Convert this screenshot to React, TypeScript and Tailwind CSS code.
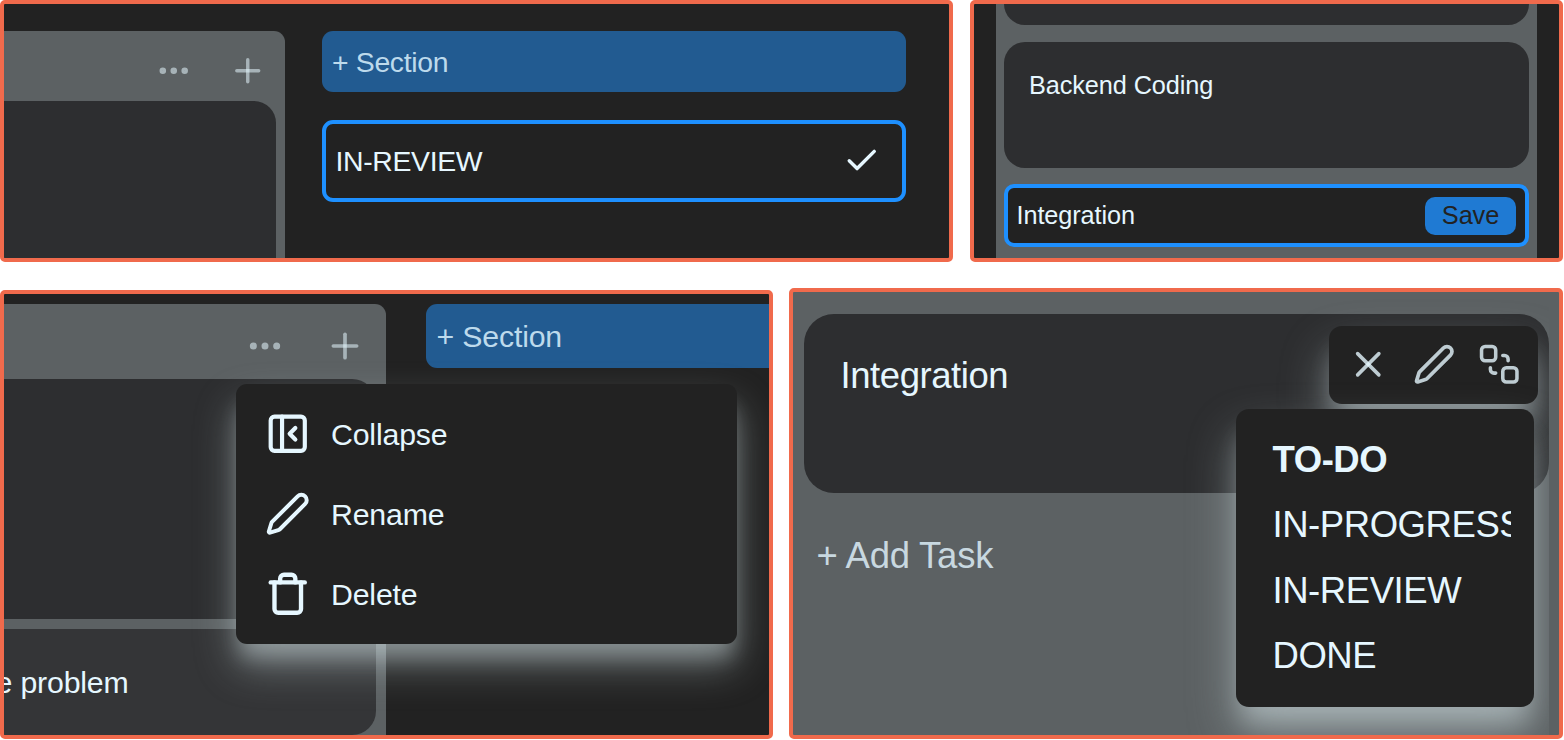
import type { ReactNode } from "react";
import { Check, Ellipsis, PanelLeftClose, Plus, SendToBack, Trash, X } from "lucide-react";

const PENCIL_PATH =
  "M21.174 6.812a1 1 0 0 0-3.986-3.987L3.842 16.174a2 2 0 0 0-.5.83l-1.321 4.352a.5.5 0 0 0 .623.622l4.353-1.32a2 2 0 0 0 .83-.497z";

function PencilIcon({ className }: { className: string }) {
  return (
    <svg
      viewBox="0 0 24 24"
      fill="none"
      stroke="currentColor"
      strokeWidth="2.1"
      strokeLinecap="round"
      strokeLinejoin="round"
      className={className}
    >
      <path d={PENCIL_PATH} />
    </svg>
  );
}

function Frame({ className, children }: { className: string; children: ReactNode }) {
  return (
    <section
      className={`relative shrink-0 overflow-hidden rounded-[5px] border-4 border-[#f06a4c] ${className}`}
    >
      {children}
    </section>
  );
}

function NewSectionPanel() {
  return (
    <Frame className="flex h-[262px] w-[953px] bg-[#222222] pt-[27px] text-[28.4px] tracking-[-0.012em]">
      <div className="flex w-[281px] shrink-0 flex-col rounded-tr-[11px] bg-[#5c6163] pr-[9px]">
        <div className="flex h-[70px] shrink-0 items-center justify-end gap-[37px] pt-[9px] pr-[9.5px] text-[#e6f7ff]/55">
          <Ellipsis className="size-[37.5px]" strokeWidth={2.2} />
          <Plus className="size-[37.5px]" strokeWidth={2.2} />
        </div>
        <div className="flex-1 rounded-tr-[22px] bg-[#2d2e30]" />
      </div>
      <div className="ml-[37px] flex w-[584px] flex-col gap-[28px]">
        <button className="flex h-[61px] items-center rounded-[11px] bg-[#225b91] px-[10px] pt-[2px] text-[#bddaec]">
          + Section
        </button>
        <div className="flex h-[82px] items-center justify-between rounded-[11px] border-4 border-[#1e90ff] pr-[22px] pl-[9.5px]">
          <span>IN-REVIEW</span>
          <Check className="size-[37.5px]" strokeWidth={2.2} />
        </div>
      </div>
    </Frame>
  );
}

function NewTaskPanel() {
  return (
    <Frame className="flex h-[262px] w-[593px] bg-[#222222] pl-[21.5px] text-[25.3px] tracking-[-0.004em]">
      <div className="flex w-[541.5px] flex-col gap-[16.5px] bg-[#5c6163] px-[8.5px]">
        <div className="h-[21px] shrink-0 rounded-b-[21px] bg-[#2d2e30]" />
        <div className="h-[126px] shrink-0 rounded-[21px] bg-[#2d2e30] px-[25px] pt-[28px] leading-[30px]">
          Backend Coding
        </div>
        <div className="flex h-[63px] shrink-0 items-center justify-between rounded-[10px] border-4 border-[#1e90ff] bg-[#222222] pr-[8.5px] pl-[8.5px]">
          <span>Integration</span>
          <button className="flex h-[38px] w-[91px] items-center justify-center rounded-[10px] bg-[#1f7ad3] text-[#222222]">
            Save
          </button>
        </div>
      </div>
    </Frame>
  );
}

function SectionMenuPanel() {
  return (
    <Frame className="flex h-[449px] w-[773px] bg-[#222222] pt-[9.5px] text-[30.3px] tracking-[-0.006em]">
      <div className="flex w-[382px] shrink-0 flex-col rounded-tr-[11px] bg-[#5c6163] pr-[10px]">
        <div className="flex h-[75px] shrink-0 items-center justify-end gap-[40px] pt-[9px] pr-[11px] text-[#e6f7ff]/55">
          <Ellipsis className="size-[40px]" strokeWidth={2.2} />
          <Plus className="size-[40px]" strokeWidth={2.2} />
        </div>
        <div className="h-[240px] shrink-0 rounded-tr-[24px] bg-[#2d2e30]" />
        <div className="mt-[10px] flex h-[106px] shrink-0 items-center rounded-br-[24px] bg-[#343537] pt-[2px]">
          <span className="-ml-[8.5px] whitespace-nowrap">e problem</span>
        </div>
      </div>
      <button className="ml-[40px] flex h-[64.5px] w-[400px] shrink-0 items-center rounded-[11px] bg-[#225b91] px-[10.5px] pt-[2px] text-[#bddaec]">
        + Section
      </button>
      <div className="absolute top-[90px] left-[232px] flex h-[260px] w-[501px] flex-col rounded-[11px] bg-[#222222] py-[10px] pl-[29px] shadow-[0_22px_40px_rgba(230,245,250,0.34),0_17px_20px_-4px_rgba(230,245,250,0.3)]">
        <div className="flex h-[80px] items-center gap-[20.5px]">
          <PanelLeftClose className="size-[45.5px]" strokeWidth={2.2} />
          <span className="pt-px">Collapse</span>
        </div>
        <div className="flex h-[80px] items-center gap-[20.5px]">
          <PencilIcon className="size-[45.5px]" />
          <span className="pt-px">Rename</span>
        </div>
        <div className="flex h-[80px] items-center gap-[20.5px]">
          <Trash className="size-[45.5px]" strokeWidth={2.3} />
          <span className="pt-px">Delete</span>
        </div>
      </div>
    </Frame>
  );
}

function MoveTaskPanel() {
  return (
    <Frame className="h-[451px] w-[774px] bg-[#5c6163] text-[36.5px] tracking-[-0.012em]">
      <div className="relative h-full w-[756px] overflow-hidden pt-[22px] pl-[11px]">
        <div className="h-[178.5px] rounded-[30px] bg-[#2d2e30] px-[36.5px] pt-[40px] leading-[44px]">
          Integration
        </div>
        <div className="mt-[41px] pl-[12.5px] leading-[44px] tracking-[-0.006em] text-[#c8d8e0]">
          + Add Task
        </div>
        <div className="absolute top-[34px] left-[536px] flex h-[77.5px] w-[208.5px] items-center gap-[23px] rounded-[13px] bg-[#222222] pb-px pl-[18px] text-[#e6f7ff]/80 shadow-[0_26px_48px_rgba(230,245,250,0.34),0_20px_24px_-5px_rgba(230,245,250,0.3)]">
          <X className="size-[42.5px]" />
          <PencilIcon className="size-[42.5px]" />
          <SendToBack className="size-[42.5px]" />
        </div>
        <ul className="absolute top-[117px] left-[443px] h-[298px] w-[298px] rounded-[13px] bg-[#222222] pt-[17.5px] pr-[23.5px] pl-[36.5px] leading-[65.6px] shadow-[0_26px_48px_rgba(230,245,250,0.34),0_20px_24px_-5px_rgba(230,245,250,0.3)]">
          <li className="font-bold">TO-DO</li>
          <li className="overflow-hidden whitespace-nowrap">IN-PROGRESS</li>
          <li>IN-REVIEW</li>
          <li>DONE</li>
        </ul>
      </div>
    </Frame>
  );
}

export default function App() {
  return (
    <main className="flex h-[740px] w-[1564px] flex-col justify-between overflow-hidden bg-white pb-px font-['Liberation_Sans',Arial,sans-serif] text-[#e6f7ff]">
      <div className="flex gap-[17px]">
        <NewSectionPanel />
        <NewTaskPanel />
      </div>
      <div className="flex items-end gap-[16px]">
        <SectionMenuPanel />
        <MoveTaskPanel />
      </div>
    </main>
  );
}
